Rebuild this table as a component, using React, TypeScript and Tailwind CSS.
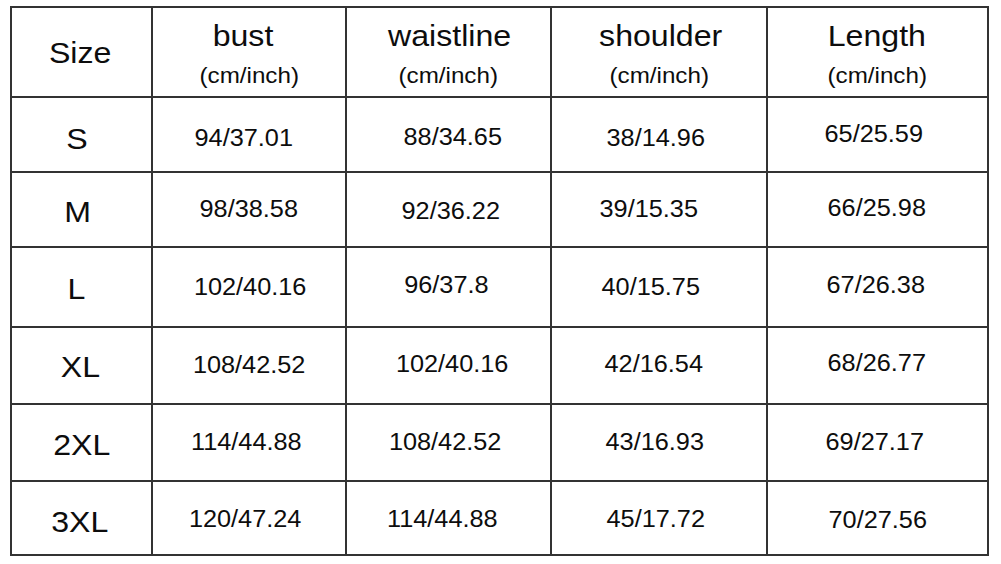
import React from "react";

type Cell = { t: string; c: string };

const headers: { main: string; mainCls: string }[] = [
  { main: "bust", mainCls: "pr-[11px]" },
  { main: "waistline", mainCls: "pl-[2px]" },
  { main: "shoulder", mainCls: "pl-[3px]" },
  { main: "Length", mainCls: "pr-[2px]" },
];

const rows: { size: Cell; vals: Cell[] }[] = [
  {
    size: { t: "S", c: "pr-[9px] pt-[8px]" },
    vals: [
      { t: "94/37.01", c: "pr-[10px] pt-[8px]" },
      { t: "88/34.65", c: "pl-[8px] pt-[5px]" },
      { t: "38/14.96", c: "pr-[7px] pt-[7px]" },
      { t: "65/25.59", c: "pr-[8px] pb-[1px]" },
    ],
  },
  {
    size: { t: "M", c: "pr-[8px] pt-[5px]" },
    vals: [
      { t: "98/38.58", c: "pr-[1px]" },
      { t: "92/36.22", c: "pl-[4px] pt-[3px]" },
      { t: "39/15.35", c: "pr-[20px] pb-[1px]" },
      { t: "66/25.98", c: "pr-[2px] pb-[3px]" },
    ],
  },
  {
    size: { t: "L", c: "pr-[11px] pt-[3px]" },
    vals: [
      { t: "102/40.16", c: "pl-[3px] pt-[1px]" },
      { t: "96/37.8", c: "pr-[4px] pb-[3px]" },
      { t: "40/15.75", c: "pr-[17px]" },
      { t: "67/26.38", c: "pr-[4px] pb-[4px]" },
    ],
  },
  {
    size: { t: "XL", c: "pr-[2px] pt-[3px]" },
    vals: [
      { t: "108/42.52", c: "" },
      { t: "102/40.16", c: "pl-[8px] pb-[3px]" },
      { t: "42/16.54", c: "pr-[10px] pb-[3px]" },
      { t: "68/26.77", c: "pr-[2px] pb-[5px]" },
    ],
  },
  {
    size: { t: "2XL", c: "pt-[5px]" },
    vals: [
      { t: "114/44.88", c: "pr-[5px] pb-[1px]" },
      { t: "108/42.52", c: "pr-[6px] pb-[1px]" },
      { t: "43/16.93", c: "pr-[8px] pb-[1px]" },
      { t: "69/27.17", c: "pr-[6px] pb-[1px]" },
    ],
  },
  {
    size: { t: "3XL", c: "pr-[3px] pt-[8px]" },
    vals: [
      { t: "120/47.24", c: "pr-[7px] pt-[2px]" },
      { t: "114/44.88", c: "pr-[13px] pt-[2px]" },
      { t: "45/17.72", c: "pr-[6px] pt-[2px]" },
      { t: "70/27.56", c: "pt-[5px]" },
    ],
  },
];

export default function App() {
  return (
    <div
      className="w-[1001px] h-[564px] bg-white pt-[6px] pl-[10px] text-[#0d0d0d]"
      style={{ fontFamily: '"Liberation Sans", Arial, sans-serif' }}
    >
      <div className="inline-grid bg-[#333] gap-[2px] p-[2px] grid-cols-[139px_192px_203px_214px_219px] grid-rows-[88px_73px_73px_78px_75px_75px_72px]">
        <div className="bg-white flex items-center justify-center pr-[2px] pt-[1px]">
          <span className="text-[30px] leading-none scale-x-[1.07]">Size</span>
        </div>
        {headers.map((h) => (
          <div key={h.main} className="bg-white flex flex-col items-center pt-[13px]">
            <span className={`text-[30px] leading-none scale-x-[1.07] ${h.mainCls}`}>{h.main}</span>
            <span className="text-[22px] leading-none mt-[14px] scale-x-110">(cm/inch)</span>
          </div>
        ))}
        {rows.map((r) => (
          <React.Fragment key={r.size.t}>
            <div className={`bg-white flex items-center justify-center ${r.size.c}`}>
              <span className="text-[30px] leading-none scale-x-[1.07]">{r.size.t}</span>
            </div>
            {r.vals.map((v, i) => (
              <div key={i} className={`bg-white flex items-center justify-center ${v.c}`}>
                <span className="text-[23px] leading-none scale-x-110">{v.t}</span>
              </div>
            ))}
          </React.Fragment>
        ))}
      </div>
    </div>
  );
}
